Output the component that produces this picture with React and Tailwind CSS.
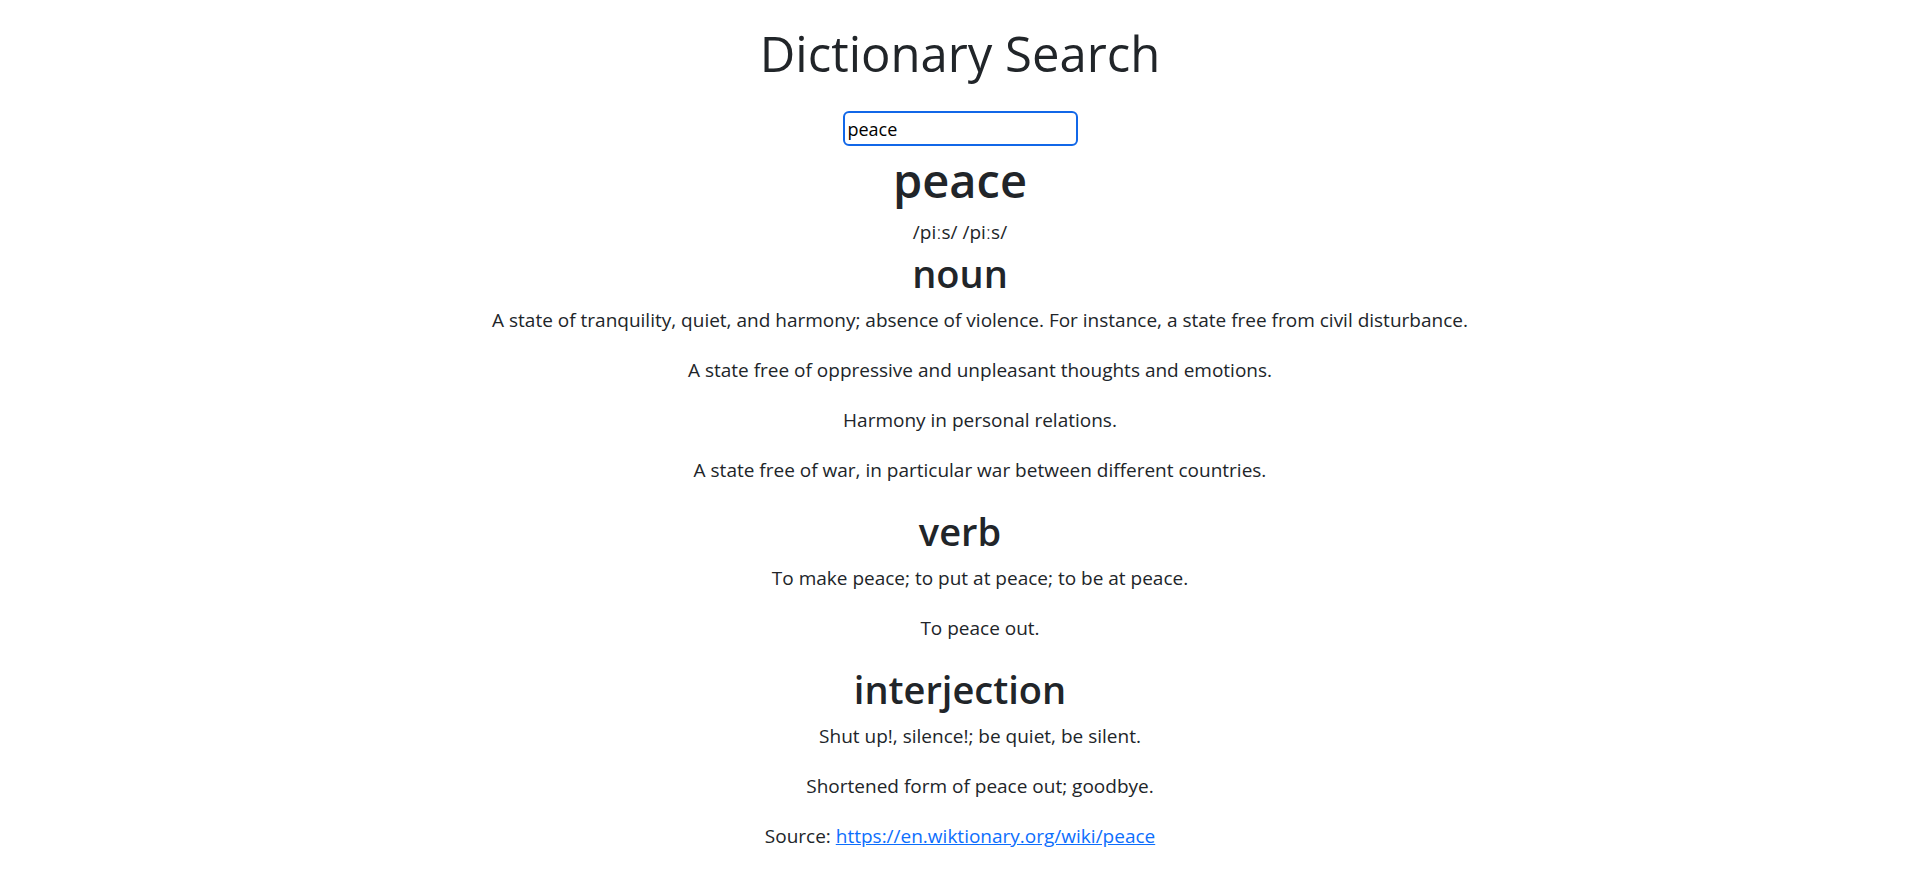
import React, { useState } from 'react';

const ENTRY = {
  word: 'peace',
  phonetics: ['/piːs/', '/piːs/'],
  meanings: [
    {
      part: 'noun',
      defs: [
        'A state of tranquility, quiet, and harmony; absence of violence. For instance, a state free from civil disturbance.',
        'A state free of oppressive and unpleasant thoughts and emotions.',
        'Harmony in personal relations.',
        'A state free of war, in particular war between different countries.',
      ],
    },
    {
      part: 'verb',
      defs: ['To make peace; to put at peace; to be at peace.', 'To peace out.'],
    },
    {
      part: 'interjection',
      defs: ['Shut up!, silence!; be quiet, be silent.', 'Shortened form of peace out; goodbye.'],
    },
  ],
  source: 'https://en.wiktionary.org/wiki/peace',
};

// definitions sit in a list, so they carry the list's left indent
const Meaning = ({ m }) => (
  <div>
    <h2 className="text-[38px] leading-[48px] font-semibold mb-[10px]">{m.part}</h2>
    <ul className="pl-[40px]">
      {m.defs.map((d) => (
        <li key={d} className="mb-[23px]">{d}</li>
      ))}
    </ul>
  </div>
);

export default function App() {
  const [q, setQ] = useState('peace');

  return (
    <div className="min-h-screen bg-white text-[#212529] text-center text-[19px] leading-[27px] font-['Segoe_UI','Open_Sans',sans-serif]">
      <div className="pt-[23px]">
        <h1 className="text-[49px] leading-[60px] font-medium">Dictionary Search</h1>
        <div className="mt-[28px] flex justify-center">
          <input
            value={q}
            onChange={(e) => setQ(e.target.value)}
            className="w-[235px] h-[35px] border-2 border-[#1167e8] rounded-[6px] px-[3px] text-[18px] text-black outline-none"
          />
        </div>
        <h1 className="mt-[4px] text-[47px] leading-[60px] font-semibold">{ENTRY.word}</h1>
        <div className="mt-[9px]">{ENTRY.phonetics.join(' ')}</div>
        <div className="mt-[3px]">
          {ENTRY.meanings.map((m) => <Meaning key={m.part} m={m} />)}
        </div>
        <p className="mb-[23px]">
          Source:{' '}
          <a href={ENTRY.source} className="text-[#0d6efd] underline">{ENTRY.source}</a>
        </p>
      </div>
    </div>
  );
}
